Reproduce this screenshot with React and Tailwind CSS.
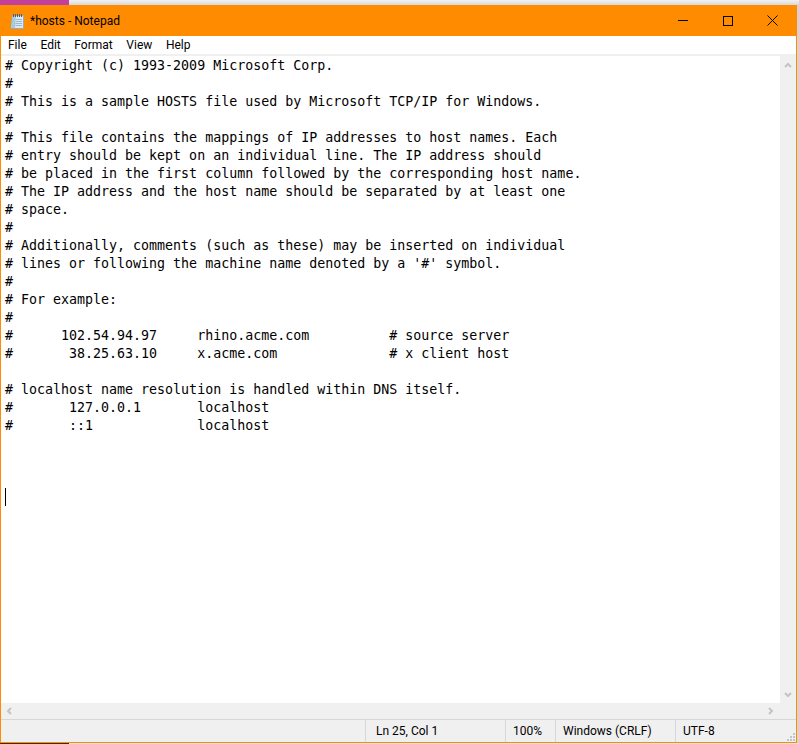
const lines = [
  '# Copyright (c) 1993-2009 Microsoft Corp.',
  '#',
  '# This is a sample HOSTS file used by Microsoft TCP/IP for Windows.',
  '#',
  '# This file contains the mappings of IP addresses to host names. Each',
  '# entry should be kept on an individual line. The IP address should',
  '# be placed in the first column followed by the corresponding host name.',
  '# The IP address and the host name should be separated by at least one',
  '# space.',
  '#',
  '# Additionally, comments (such as these) may be inserted on individual',
  "# lines or following the machine name denoted by a '#' symbol.",
  '#',
  '# For example:',
  '#',
  '#      102.54.94.97     rhino.acme.com          # source server',
  '#       38.25.63.10     x.acme.com              # x client host',
  '',
  '# localhost name resolution is handled within DNS itself.',
  '#       127.0.0.1       localhost',
  '#       ::1             localhost',
  '',
  '',
  '',
];

const menus = ['File', 'Edit', 'Format', 'View', 'Help'];

const NotepadIcon = () => (
  <svg width="16" height="16" viewBox="0 0 16 16">
    <path d="M2.5 2.5h11v13H.8z" fill="#d6ebf7" stroke="#8aa5b5" strokeWidth="0.8" />
    <path d="M2.5 3h3.5l-1 12H1z" fill="#a8cbdc" />
    <path d="M6 6.5h6M6 8.5h6M5.5 10.5h6.5M5.5 12.5h6.5" stroke="#9fb9c8" />
    <path d="M3.5 1v3M5.5 1v3M7.5 1v3M9.5 1v3M11.5 1v3" stroke="#5a5a5a" />
  </svg>
);

const Arrow = ({ d }) => (
  <svg width="8" height="8" viewBox="0 0 8 8">
    <path d={d} fill="none" stroke="#c4c4c4" strokeWidth="2" />
  </svg>
);

export default function App() {
  return (
    <div className="w-[799px] h-[744px] flex flex-col bg-[#d4d4d4] overflow-hidden font-['Roboto','Open_Sans',sans-serif] text-[12px] text-black">
      <div className="h-[5px] flex shrink-0">
        <div className="w-[69px] bg-[#c2409c]"></div>
        <div className="flex-1 bg-gradient-to-b from-[#f2f2f2] to-[#d8d8d8]"></div>
      </div>

      <div className="flex-1 min-h-0 mr-[2px] flex flex-col border-x border-b border-[#ff8c00] bg-white">
        <div className="h-[31px] -mx-px shrink-0 flex items-center bg-[#ff8c00]">
          <div className="ml-[10px] mr-[4px] flex"><NotepadIcon /></div>
          <span className="text-[12px]">*hosts - Notepad</span>
          <div className="ml-auto mr-[2px] flex h-full">
            <div className="w-[45px] flex items-center justify-center">
              <div className="w-[10px] h-px bg-black"></div>
            </div>
            <div className="w-[45px] flex items-center justify-center">
              <div className="w-[10px] h-[10px] border border-black"></div>
            </div>
            <div className="w-[45px] flex items-center justify-center">
              <svg width="11" height="11" viewBox="0 0 11 11">
                <path d="M.5.5l10 10M10.5.5l-10 10" stroke="#000" />
              </svg>
            </div>
          </div>
        </div>

        <div className="h-[18px] shrink-0 flex items-center pt-px pl-[0.2px] bg-white">
          {menus.map(m => (
            <span key={m} className="px-[6.8px] leading-[17px]">{m}</span>
          ))}
        </div>

        <div className="flex-1 min-h-0 flex border-t-2 border-[#f0f0f0]">
          <div className="relative flex-1 overflow-hidden pl-1 pt-px bg-white">
            <pre className="font-['DejaVu_Sans_Mono',monospace] text-[13.3px] leading-[18px] text-black">
              {lines.join('\n')}
            </pre>
            <div className="absolute left-[4px] top-[432px] w-px h-[18px] bg-black"></div>
          </div>
          <div className="w-[16px] shrink-0 flex flex-col items-center justify-between pt-[5px] pb-1 bg-[#f0f0f0]">
            <Arrow d="M1 6l3-3 3 3" />
            <Arrow d="M1 2l3 3 3-3" />
          </div>
        </div>

        <div className="h-[16px] shrink-0 flex items-center justify-between pl-1 pr-[21px] bg-[#f0f0f0]">
          <Arrow d="M6 1L3 4l3 3" />
          <Arrow d="M2 1l3 3-3 3" />
        </div>

        <div className="h-[23px] shrink-0 flex bg-[#f0f0f0] border-t border-[#d7d7d7] leading-[22px]">
          <div className="w-[364px]"></div>
          <div className="w-[140px] pl-[10px] border-l border-[#d7d7d7]">Ln 25, Col 1</div>
          <div className="w-[50px] pl-[7px] border-l border-[#d7d7d7]">100%</div>
          <div className="w-[120px] pl-[7px] border-l border-[#d7d7d7]">Windows (CRLF)</div>
          <div className="flex-1 relative pl-[7px] border-l border-[#d7d7d7]">
            UTF-8
            <svg className="absolute right-0 bottom-0" width="10" height="10" viewBox="0 0 10 10">
              <path d="M7 1h2v2H7zM4 4h2v2H4zM7 4h2v2H7zM1 7h2v2H1zM4 7h2v2H4zM7 7h2v2H7z" fill="#c4c4c4" />
            </svg>
          </div>
        </div>
      </div>

      <div className="h-px flex shrink-0">
        <div className="w-[69px] bg-[#3a2a10]"></div>
        <div className="flex-1 bg-[#e4e4e4]"></div>
      </div>
    </div>
  );
}
